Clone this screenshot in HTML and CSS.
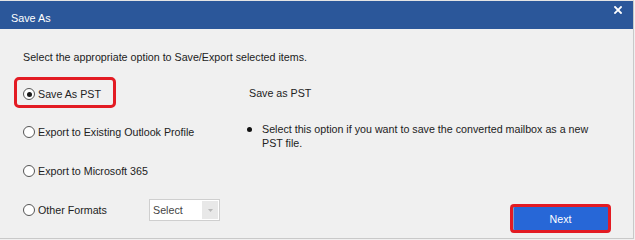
FILE: index.html
```html
<!DOCTYPE html>
<html>
<head>
<meta charset="utf-8">
<link rel="stylesheet" href="styles.css">
</head>
<body>
<div class="window">
  <div class="titlebar">
    <span class="title">Save As</span>
    <svg class="close" width="8" height="8" viewBox="0 0 8 8"><path d="M1 1L7 7M7 1L1 7" stroke="#fff" stroke-width="1.8" stroke-linecap="square"/></svg>
  </div>
  <div class="body">
    <div class="intro">Select the appropriate option to Save/Export selected items.</div>
    <div class="main">
      <div class="options">
        <div class="opt boxed"><span class="radio checked"></span><span>Save As PST</span></div>
        <div class="opt r2"><span class="radio"></span><span>Export to Existing Outlook Profile</span></div>
        <div class="opt r3"><span class="radio"></span><span>Export to Microsoft 365</span></div>
        <div class="opt r4"><span class="radio"></span><span class="lbl">Other Formats</span>
          <div class="select"><span class="sel-text">Select</span><span class="sel-arrow"><svg width="5" height="3" viewBox="0 0 5 3"><path d="M0 0H5L2.5 3Z" fill="#b8b8b8"/></svg></span></div>
        </div>
      </div>
      <div class="desc">
        <div class="desc-title">Save as PST</div>
        <div class="bullet"><span class="dot"></span><span>Select this option if you want to save the converted mailbox as a new<br>PST file.</span></div>
        <button class="next">Next</button>
      </div>
    </div>
  </div>
</div>
</body>
</html>
```
FILE: styles.css
```css
html, body { margin: 0; padding: 0; background: #f0f0f0; }
body { font-family: "Liberation Sans", Arial, sans-serif; font-size: 10.7px; color: #222; }
.window {
  width: 634px; height: 239px; box-sizing: border-box;
  border-top: 1px solid #e4e4e4; border-right: 1px solid #c9c9c9; border-bottom: 1px solid #c9c9c9;
  background: #f0f0f0; display: flex; flex-direction: column;
}
.titlebar {
  height: 28px; flex: none; background: #2b579a; color: #fff;
  display: flex; align-items: flex-start; justify-content: space-between;
  padding: 0 11px 0 11px; box-sizing: border-box;
}
.title { margin-top: 10px; line-height: 14px; font-size: 10.8px; }
.close { margin-top: 5px; }
.body { flex: 1; display: flex; flex-direction: column; padding: 21px 0 0 14px; }
.intro { margin-left: 9px; line-height: 14px; }
.main { flex: 1; display: flex; margin-top: 13px; }
.options { width: 233px; flex: none; display: flex; flex-direction: column; }
.opt { display: flex; align-items: center; padding-left: 9px; height: 20px; }
.opt .radio { margin-right: 3px; }
.boxed {
  height: 31px; box-sizing: border-box; width: 102px;
  border: 3px solid #e31b23; border-radius: 5px; padding: 3px 0 0 6px;
}
.r2 { margin-top: 14px; }
.r3 { margin-top: 19px; }
.r4 { margin-top: 18px; height: 22px; }
.radio {
  width: 12px; height: 12px; box-sizing: border-box; border-radius: 50%;
  border: 1px solid #555; background: #fff; flex: none; position: relative;
}
.radio.checked::after {
  content: ""; position: absolute; left: 2.5px; top: 2.5px; width: 5px; height: 5px;
  border-radius: 50%; background: #1a1a1a;
}
.lbl { width: 111px; }
.select {
  width: 71px; height: 22px; box-sizing: border-box; border: 1px solid #cfcfcf; background: #fff;
  display: flex; align-items: stretch; justify-content: space-between;
}
.sel-text { padding-left: 3px; line-height: 20px; color: #444; }
.sel-arrow { width: 16px; background: #e8e8e8; display: flex; align-items: center; justify-content: center; margin: 1px; }
.desc { flex: 1; display: flex; flex-direction: column; }
.desc-title { margin-top: 9px; line-height: 14px; margin-left: 2px; }
.bullet { display: flex; margin-top: 22px; line-height: 14px; }
.dot { width: 5px; height: 5px; border-radius: 50%; background: #111; margin: 5px 10px 0 0; flex: none; }
.next {
  margin-top: auto; align-self: flex-end; margin-right: 22px; margin-bottom: 5px;
  width: 101px; height: 29px; box-sizing: border-box; border: 3px solid #e31b23; border-radius: 4px;
  background: #2767d7; color: #fff; font-family: inherit; font-size: 10.7px; padding: 0;
  box-shadow: inset 1px 0 0 #8a9bb8;
}
```
